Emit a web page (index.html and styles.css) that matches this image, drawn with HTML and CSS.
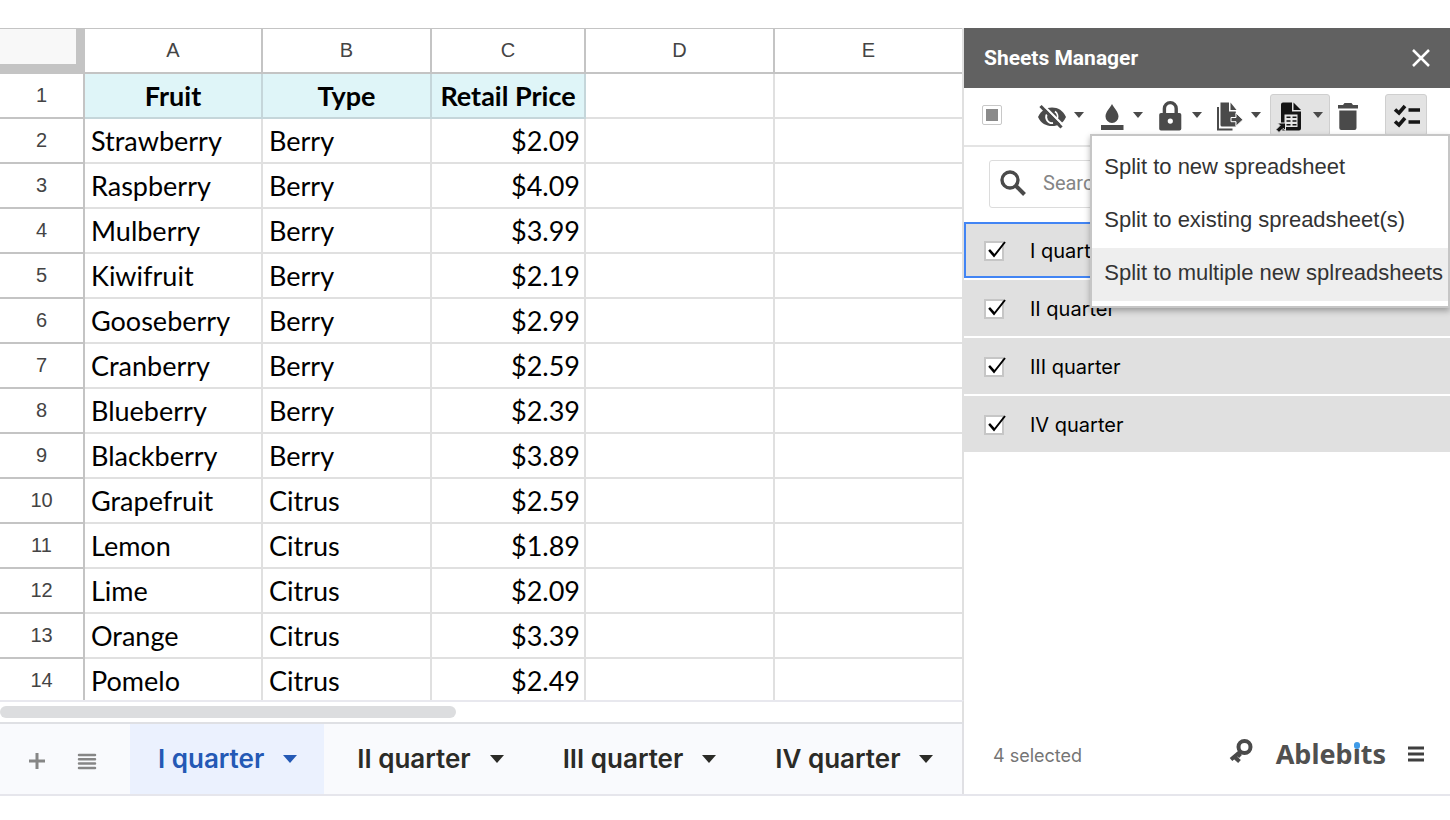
FILE: index.html
```html
<!DOCTYPE html>
<html lang="en">
<head>
<meta charset="utf-8">
<title>Sheets Manager</title>
<link rel="stylesheet" href="styles.css">
</head>
<body>
<div class="app">
  <main class="sheet">
    <div class="grid-view">
      <table class="grid">
        <colgroup><col class="col-num"><col class="col-a"><col class="col-b"><col class="col-c"><col class="col-d"><col></colgroup>
        <thead>
          <tr><td class="corner"></td><th>A</th><th>B</th><th>C</th><th>D</th><th>E</th></tr>
        </thead>
        <tbody>
          <tr class="titles"><th>1</th><td>Fruit</td><td>Type</td><td>Retail Price</td><td></td><td></td></tr>
          <tr><th>2</th><td>Strawberry</td><td>Berry</td><td>$2.09</td><td></td><td></td></tr>
          <tr><th>3</th><td>Raspberry</td><td>Berry</td><td>$4.09</td><td></td><td></td></tr>
          <tr><th>4</th><td>Mulberry</td><td>Berry</td><td>$3.99</td><td></td><td></td></tr>
          <tr><th>5</th><td>Kiwifruit</td><td>Berry</td><td>$2.19</td><td></td><td></td></tr>
          <tr><th>6</th><td>Gooseberry</td><td>Berry</td><td>$2.99</td><td></td><td></td></tr>
          <tr><th>7</th><td>Cranberry</td><td>Berry</td><td>$2.59</td><td></td><td></td></tr>
          <tr><th>8</th><td>Blueberry</td><td>Berry</td><td>$2.39</td><td></td><td></td></tr>
          <tr><th>9</th><td>Blackberry</td><td>Berry</td><td>$3.89</td><td></td><td></td></tr>
          <tr><th>10</th><td>Grapefruit</td><td>Citrus</td><td>$2.59</td><td></td><td></td></tr>
          <tr><th>11</th><td>Lemon</td><td>Citrus</td><td>$1.89</td><td></td><td></td></tr>
          <tr><th>12</th><td>Lime</td><td>Citrus</td><td>$2.09</td><td></td><td></td></tr>
          <tr><th>13</th><td>Orange</td><td>Citrus</td><td>$3.39</td><td></td><td></td></tr>
          <tr><th>14</th><td>Pomelo</td><td>Citrus</td><td>$2.49</td><td></td><td></td></tr>
        </tbody>
      </table>
    </div>
    <div class="scroll-track"><div class="scroll-thumb"></div></div>
    <nav class="tabs" aria-label="Sheets">
      <div class="tab-tools">
        <button class="icon-button" aria-label="Add sheet"><svg width="18" height="18" viewBox="0 0 18 18"><path d="M9 1v16M1 9h16" stroke="#868686" stroke-width="3"/></svg></button>
        <button class="icon-button" aria-label="All sheets"><svg width="20" height="18" viewBox="0 0 20 18"><path d="M2 3h16M2 7.300h16M2 11.600h16M2 16h16" stroke="#868686" stroke-width="2.500" stroke-linecap="round"/></svg></button>
      </div>
      <button class="tab tab-active">I quarter<svg class="tab-caret" width="14" height="8" viewBox="0 0 14 8"><path d="M0 0h14L7 8z"/></svg></button>
      <button class="tab">II quarter<svg class="tab-caret" width="14" height="8" viewBox="0 0 14 8"><path d="M0 0h14L7 8z"/></svg></button>
      <button class="tab">III quarter<svg class="tab-caret" width="14" height="8" viewBox="0 0 14 8"><path d="M0 0h14L7 8z"/></svg></button>
      <button class="tab">IV quarter<svg class="tab-caret" width="14" height="8" viewBox="0 0 14 8"><path d="M0 0h14L7 8z"/></svg></button>
    </nav>
  </main>

  <aside class="panel">
    <header class="panel-head">
      <h1 class="panel-title">Sheets Manager</h1>
      <button class="icon-button" aria-label="Close"><svg width="20" height="20" viewBox="0 0 20 20"><path d="M2 2l16 16M18 2L2 18" stroke="#fff" stroke-width="2.500"/></svg></button>
    </header>
    <div class="toolbar">
      <input class="select-all" type="checkbox" aria-label="Select all">
      <div class="tools">
        <button class="tool" aria-label="Hide">
          <svg width="32" height="40" viewBox="0 0 32 40"><path d="M2 22C5 15.500 10 12.500 16 12.500S27 15.500 30 22C27 28.500 22 31 16 31S5 28.500 2 22z"/><path d="M19 16.500a6 6 0 0 1 2 7.500M11 19a6 6 0 0 0 6 9" fill="none" stroke="#fff" stroke-width="1.800"/><path d="M6.500 9.500L28 31" stroke="#fff" stroke-width="2.400"/><path d="M4.500 11L25.500 32.500" stroke="#4a4a4a" stroke-width="3.200"/></svg>
          <svg width="12" height="6" viewBox="0 0 12 6"><path d="M1 0h10L6 6z"/></svg>
        </button>
        <button class="tool" aria-label="Colour">
          <svg width="32" height="40" viewBox="0 0 32 40"><path d="M6 30h22.500v5H6zM17 9c2 4 6.500 8 6.500 12.500a6.500 6.500 0 0 1-13 0C10.500 17 15 13 17 9z"/></svg>
          <svg width="12" height="6" viewBox="0 0 12 6"><path d="M1 0h10L6 6z"/></svg>
        </button>
        <button class="tool" aria-label="Protect">
          <svg width="32" height="40" viewBox="0 0 32 40"><path fill-rule="evenodd" d="M7 18h18.500q1.800 0 1.800 1.800v14q0 1.700-1.800 1.700H7q-1.800 0-1.800-1.700v-14Q5.200 18 7 18zm9.300 5.500a2.600 2.600 0 1 0 0 5.200 2.600 2.600 0 1 0 0-5.200z"/><path d="M10.400 18v-4.500a5.900 5.900 0 0 1 11.800 0V18" fill="none" stroke="#4a4a4a" stroke-width="3.400"/></svg>
          <svg width="12" height="6" viewBox="0 0 12 6"><path d="M1 0h10L6 6z"/></svg>
        </button>
        <button class="tool" aria-label="Copy">
          <svg width="32" height="40" viewBox="0 0 32 40"><path d="M5 12v22.500h14.500" fill="none" stroke="#4a4a4a" stroke-width="2"/><path d="M7.500 7.500h8.500v9h6.800v15H9q-1.500 0-1.500-1.500z"/><path d="M17.500 7.500l6 7.500h-6z"/><path d="M18 22.500h5V18l7 6.700-7 6.500v-4.500h-5z" stroke="#fff" stroke-width="1"/></svg>
          <svg width="12" height="6" viewBox="0 0 12 6"><path d="M1 0h10L6 6z"/></svg>
        </button>
        <button class="tool tool-open" aria-label="Split" aria-expanded="true">
          <svg width="32" height="40" viewBox="0 0 32 40"><g fill="#151515"><path d="M11 7.500h9v9h9v17q0 2-2 2H11q-2 0-2-2v-24q0-2 2-2z"/><path d="M21.500 7.500l7.500 7.500h-7.500z"/></g><path d="M12.500 19.500h13v12.500h-13z" fill="#e6e6e6"/><path d="M14.500 22.300h4M20.500 22.300h4M14.500 26h4M20.500 26h4M14.500 29.700h4M20.500 29.700h4" stroke="#151515" stroke-width="1.600"/><path d="M5.500 28h8v7.500l-2.500-2-4 4-3-3 4-4z" fill="#151515" stroke="#e6e6e6" stroke-width="1"/></svg>
          <svg width="12" height="6" viewBox="0 0 12 6"><path d="M1 0h10L6 6z"/></svg>
        </button>
        <button class="tool tool-plain" aria-label="Delete">
          <svg width="32" height="40" viewBox="0 0 32 40"><path d="M6 10h5l1.500-2h7l1.500 2h5v3.500H6zM7.300 15.500h17.200v17.500q0 2-2 2H9.300q-2 0-2-2z"/></svg>
        </button>
        <button class="tool tool-list" aria-label="Multiple selection" aria-pressed="true">
          <svg width="32" height="40" viewBox="0 0 32 40"><g fill="none" stroke="#151515"><path d="M5 14.500l4 3.500 6-7M5 26.500l4 3.500 6-7" stroke-width="3.600"/><path d="M18.500 15h11.500M18.500 27h11.500" stroke-width="3.600"/></g></svg>
        </button>
        <div class="menu" role="menu">
          <button class="menu-item" role="menuitem">Split to new spreadsheet</button>
          <button class="menu-item" role="menuitem">Split to existing spreadsheet(s)</button>
          <button class="menu-item menu-item-hover" role="menuitem">Split to multiple new splreadsheets</button>
        </div>
      </div>
    </div>
    <label class="search">
      <svg width="28" height="28" viewBox="0 0 28 28"><g fill="none" stroke="#4a4a4a"><circle cx="11" cy="11" r="8" stroke-width="3.400"/><path d="M17 17l8.500 8.500" stroke-width="4"/></g></svg>
      <input class="search-input" type="text" placeholder="Search" aria-label="Search">
    </label>
    <ul class="sheet-list">
      <li><label class="sheet-row sheet-row-current"><span class="tick"><input type="checkbox" checked><svg width="20" height="18" viewBox="0 0 20 18"><path d="M2 9l5 6L18 1 M2.500 9l4.500 5" fill="none" stroke="#000" stroke-width="2"/></svg></span>I quarter</label></li>
      <li><label class="sheet-row"><span class="tick"><input type="checkbox" checked><svg width="20" height="18" viewBox="0 0 20 18"><path d="M2 9l5 6L18 1 M2.500 9l4.500 5" fill="none" stroke="#000" stroke-width="2"/></svg></span>II quarter</label></li>
      <li><label class="sheet-row"><span class="tick"><input type="checkbox" checked><svg width="20" height="18" viewBox="0 0 20 18"><path d="M2 9l5 6L18 1 M2.500 9l4.500 5" fill="none" stroke="#000" stroke-width="2"/></svg></span>III quarter</label></li>
      <li><label class="sheet-row"><span class="tick"><input type="checkbox" checked><svg width="20" height="18" viewBox="0 0 20 18"><path d="M2 9l5 6L18 1 M2.500 9l4.500 5" fill="none" stroke="#000" stroke-width="2"/></svg></span>IV quarter</label></li>
    </ul>
    <footer class="panel-foot">
      <span class="count">4 selected</span>
      <button class="icon-button key" aria-label="Licence"><svg width="26" height="26" viewBox="0 0 26 26"><g fill="none" stroke="#4a4a4a"><circle cx="16.500" cy="9" r="6" stroke-width="4"/><path d="M12.500 13.500L3 21.500M6 18.500l5.500 5M9.500 15.500l3 3" stroke-width="4"/></g></svg></button>
      <a class="brand" href="#">Ableb<span class="brand-i">i</span>ts</a>
      <button class="icon-button" aria-label="Menu"><svg width="16" height="16" viewBox="0 0 16 16"><path d="M0 2h16M0 8h16M0 14h16" stroke="#3f3f3f" stroke-width="3"/></svg></button>
    </footer>
  </aside>
</div>
</body>
</html>
```

FILE: styles.css
```css
* { box-sizing: border-box; }

body {
  margin: 0;
  background: #fff;
  color: #000;
  font-family: "Liberation Sans", Arial, sans-serif;
}

button {
  border: 0;
  padding: 0;
  background: none;
  color: inherit;
  font: inherit;
}

svg { display: block; flex: none; }

.app {
  display: flex;
  height: 100vh;
  padding: 28px 0 24px;
}

/* spreadsheet */
.sheet {
  display: flex;
  flex: 1;
  flex-direction: column;
  min-width: 0;
  border-bottom: 2px solid #e6e6ec;
}

.grid-view {
  flex: 1;
  min-height: 0;
  overflow: hidden;
  border-right: 2px solid #e0e0e0;
}

.grid {
  width: 100%;
  table-layout: fixed;
  border-collapse: separate;
  border-spacing: 0;
}

.col-num { width: 85px; }
.col-a { width: 178px; }
.col-b { width: 169px; }
.col-c { width: 154px; }
.col-d { width: 189px; }

.grid th,
.grid td {
  height: 45px;
  padding: 0 6px;
  border-right: 2px solid #e0e0e0;
  border-bottom: 2px solid #e0e0e0;
  white-space: nowrap;
}

.grid tr > :last-child { border-right: 0; }

.grid th {
  padding: 0;
  border-color: #c4c4c4;
  color: #444;
  font-size: 20px;
  font-weight: 400;
}

.grid thead th,
.grid .corner {
  height: 46px;
  border-top: 1px solid #c4c4c4;
}

.grid .corner {
  border-right: 9px solid #c4c4c4;
  border-bottom: 10px solid #c4c4c4;
  background: #f8f8f8;
}

.grid td {
  font-family: Lato, sans-serif;
  font-size: 27px;
  line-height: 32px;
}

.grid td:nth-child(4) { padding-right: 4px; text-align: right; }

.grid .titles td {
  padding: 0;
  font-weight: 700;
  text-align: center;
}

.titles td:nth-child(-n+4) {
  border-color: #c5d6da;
  background: #dff5f8;
}

.scroll-track {
  padding: 4px 0;
  border-top: 2px solid #e8e8ee;
  border-right: 2px solid #e0e0e0;
}

.scroll-thumb {
  width: 456px;
  height: 12px;
  border-radius: 6px;
  background: #dcdddf;
}

/* sheet tabs */
.tabs {
  display: flex;
  height: 72px;
  border-top: 2px solid #dfe0e4;
  border-right: 2px solid #e0e0e4;
  background: #f9fafd;
}

.tab-tools {
  display: flex;
  flex: none;
  align-items: center;
  gap: 31px;
  width: 130px;
  padding: 4px 0 0 28px;
}

.tab {
  display: flex;
  flex: none;
  align-items: center;
  gap: 19px;
  padding: 0 26px 1px 33px;
  color: #2b2b27;
  font-family: Inter, sans-serif;
  font-size: 26px;
  font-weight: 600;
  white-space: nowrap;
}

.tab-active {
  padding: 0 27px 1px 28px;
  background: #ebf1fe;
  color: #2459b5;
}

.tab-caret { fill: currentColor; }

/* side panel */
.panel {
  display: flex;
  flex-direction: column;
  flex: none;
  width: 486px;
  border-bottom: 2px solid #e6e6ec;
}

.panel-head {
  display: flex;
  align-items: center;
  justify-content: space-between;
  height: 60px;
  padding: 0 19px 0 20px;
  background: #616161;
}

.panel-title {
  margin: 0;
  color: #fff;
  font-family: Roboto, sans-serif;
  font-size: 21px;
  font-weight: 700;
}

.toolbar {
  display: flex;
  align-items: center;
  gap: 32px;
  height: 59px;
  padding: 0 0 4px 18px;
  border-bottom: 2px solid #e4e4e4;
}

.select-all {
  flex: none;
  width: 20px;
  height: 20px;
  margin: 0;
  appearance: none;
  border: 1px solid #c8c8c8;
  border-radius: 2px;
  background: #8a8a8a content-box;
  padding: 3px;
}

.tools {
  position: relative;
  display: flex;
  flex: 1;
}

.tool {
  display: flex;
  align-items: center;
  gap: 5px;
  width: 59px;
  height: 42px;
  padding-left: 2px;
  fill: #4a4a4a;
}

.tool-open,
.tool-list {
  border: 1px solid #cfcfcf;
  border-radius: 3px;
  background: #e3e3e3;
}

.tool-open { gap: 8px; width: 60px; padding-left: 1px; }
.tool-plain { width: 36px; }
.tool-list { width: 42px; margin-left: 19px; padding-left: 4px; }

.menu {
  position: absolute;
  top: 40px;
  right: 0;
  padding: 6px 0 5px;
  border: 2px solid #c6c6c6;
  background: #fff;
  box-shadow: 0 3px 6px rgba(0, 0, 0, 0.3);
}

.menu-item {
  display: block;
  width: 100%;
  height: 53px;
  padding: 0 5px 2px 12px;
  color: #333;
  font-size: 22px;
  text-align: left;
  white-space: nowrap;
}

.menu-item-hover { background: #eee; }

.search {
  display: flex;
  align-items: center;
  gap: 16px;
  height: 48px;
  margin: 13px 25px 14px;
  padding: 0 9px 2px;
  border: 1px solid #dcdcdc;
  border-radius: 3px;
}

.search-input {
  flex: 1;
  min-width: 0;
  padding: 0;
  border: 0;
  outline: 0;
  background: none;
  font-family: Roboto, sans-serif;
  font-size: 20px;
}

.search-input::placeholder { color: #858585; }

.sheet-list {
  display: flex;
  flex-direction: column;
  gap: 2px;
  margin: 0;
  padding: 0;
  list-style: none;
}

.sheet-row {
  display: flex;
  align-items: center;
  gap: 26px;
  height: 56px;
  padding: 2px 20px 0;
  background: #e0e0e0;
  font-family: Inter, sans-serif;
  font-size: 20px;
}

.sheet-row-current {
  outline: 2px solid #4285f4;
  outline-offset: -2px;
}

.tick { position: relative; }

.tick input {
  display: block;
  width: 20px;
  height: 20px;
  margin: 0;
  appearance: none;
  border: 2px solid #c6c6c6;
  background: #fff;
}

.tick svg {
  position: absolute;
  top: 0;
  left: 3px;
}

.panel-foot {
  display: flex;
  align-items: center;
  height: 80px;
  margin-top: auto;
  padding: 0 26px 0 29px;
}

.count {
  flex: 1;
  padding-top: 2px;
  color: #757575;
  font-family: Inter, sans-serif;
  font-size: 18px;
}

.key { padding-bottom: 6px; }

.brand {
  padding: 0 22px 2px;
  color: #505050;
  font-family: "Noto Sans", sans-serif;
  font-size: 27px;
  font-weight: 700;
  text-decoration: none;
}

.brand-i { position: relative; }

.brand-i::after {
  position: absolute;
  top: 7px;
  left: 1px;
  width: 6px;
  height: 7px;
  border-radius: 3px;
  background: #3f9be8;
  content: "";
}
```
